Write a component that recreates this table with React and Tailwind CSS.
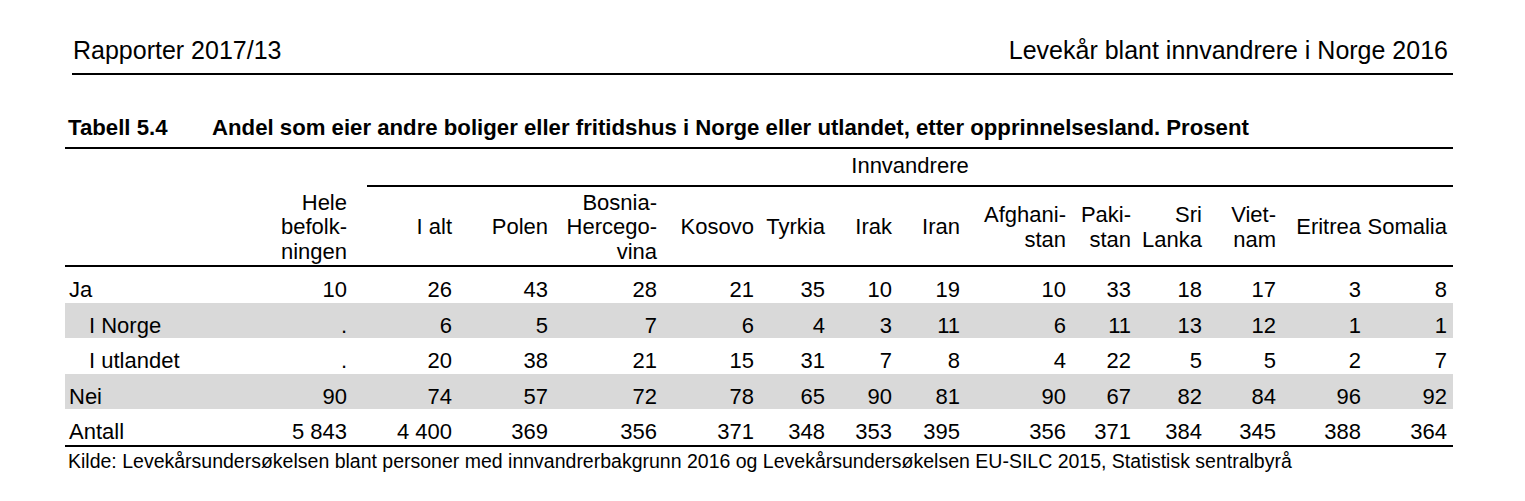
import React from "react";

const COLS =
  "grid grid-cols-[195px_93px_105px_96px_109px_97px_71px_67px_68px_106px_65px_71px_74px_85px_86px]";

const heads = [
  ["Hele", "befolk-", "ningen"],
  ["I alt"],
  ["Polen"],
  ["Bosnia-", "Hercego-", "vina"],
  ["Kosovo"],
  ["Tyrkia"],
  ["Irak"],
  ["Iran"],
  ["Afghani-", "stan"],
  ["Paki-", "stan"],
  ["Sri", "Lanka"],
  ["Viet-", "nam"],
  ["Eritrea"],
  ["Somalia"],
];

const rows = [
  { label: "Ja", indent: false, gray: false, v: ["10", "26", "43", "28", "21", "35", "10", "19", "10", "33", "18", "17", "3", "8"] },
  { label: "I Norge", indent: true, gray: true, v: [".", "6", "5", "7", "6", "4", "3", "11", "6", "11", "13", "12", "1", "1"] },
  { label: "I utlandet", indent: true, gray: false, v: [".", "20", "38", "21", "15", "31", "7", "8", "4", "22", "5", "5", "2", "7"] },
  { label: "Nei", indent: false, gray: true, v: ["90", "74", "57", "72", "78", "65", "90", "81", "90", "67", "82", "84", "96", "92"] },
  { label: "Antall", indent: false, gray: false, v: ["5 843", "4 400", "369", "356", "371", "348", "353", "395", "356", "371", "384", "345", "388", "364"] },
];

export default function App() {
  return (
    <div
      className="w-[1525px] h-[501px] bg-white text-black overflow-hidden"
      style={{ fontFamily: '"Liberation Sans", Arial, sans-serif' }}
    >
      {/* Page header */}
      <div className="ml-[72px] w-[1381px] pt-[36px] pb-[8px] border-b-[2.5px] border-black flex justify-between text-[25px] leading-[29px] pl-[1px] pr-[5px]">
        <span>Rapporter 2017/13</span>
        <span>Levekår blant innvandrere i Norge 2016</span>
      </div>

      <div className="ml-[65px] w-[1388px] mt-[40px]">
        {/* Title */}
        <div className="flex border-b-2 border-black text-[22.2px] leading-[25px] font-bold pl-[3px] pb-[7px]">
          <span className="w-[144px] shrink-0">Tabell 5.4</span>
          <span className="whitespace-nowrap">Andel som eier andre boliger eller fritidshus i Norge eller utlandet, etter opprinnelsesland. Prosent</span>
        </div>

        {/* Spanner row */}
        <div className="grid grid-cols-[288px_1100px] text-[22px]">
          <div />
          <div className="ml-[14px] h-[38px] border-b-2 border-black flex items-center justify-center leading-[22px] pb-[3px]">
            Innvandrere
          </div>
        </div>

        {/* Column heads */}
        <div className={`${COLS} h-[80px] border-b-2 border-black text-[22px] leading-[24.5px] pt-[3px]`}>
          <div />
          {heads.map((h, i) => (
            <div key={i} className="flex flex-col justify-center items-end text-right pr-[6px]">
              {h.map((line, j) => (
                <span key={j} className="whitespace-nowrap">{line}</span>
              ))}
            </div>
          ))}
        </div>

        {/* Body */}
        <div className="border-b-2 border-black text-[22px] leading-[22px]">
          {rows.map((r, i) => (
            <div
              key={i}
              className={`${COLS} h-[35.5px] pt-[12px] ${r.gray ? "bg-[#d9d9d9]" : ""}`}
            >
              <div className={`whitespace-nowrap ${r.indent ? "pl-[24px]" : "pl-[4px]"}`}>{r.label}</div>
              {r.v.map((x, j) => (
                <div key={j} className="text-right pr-[6px] whitespace-nowrap">
                  {x}
                </div>
              ))}
            </div>
          ))}
        </div>

        {/* Source */}
        <div className="pl-[3px] pt-[4px] text-[19.5px] leading-[20px] whitespace-nowrap">
          Kilde: Levekårsundersøkelsen blant personer med innvandrerbakgrunn 2016 og Levekårsundersøkelsen EU-SILC 2015, Statistisk sentralbyrå
        </div>
      </div>
    </div>
  );
}
